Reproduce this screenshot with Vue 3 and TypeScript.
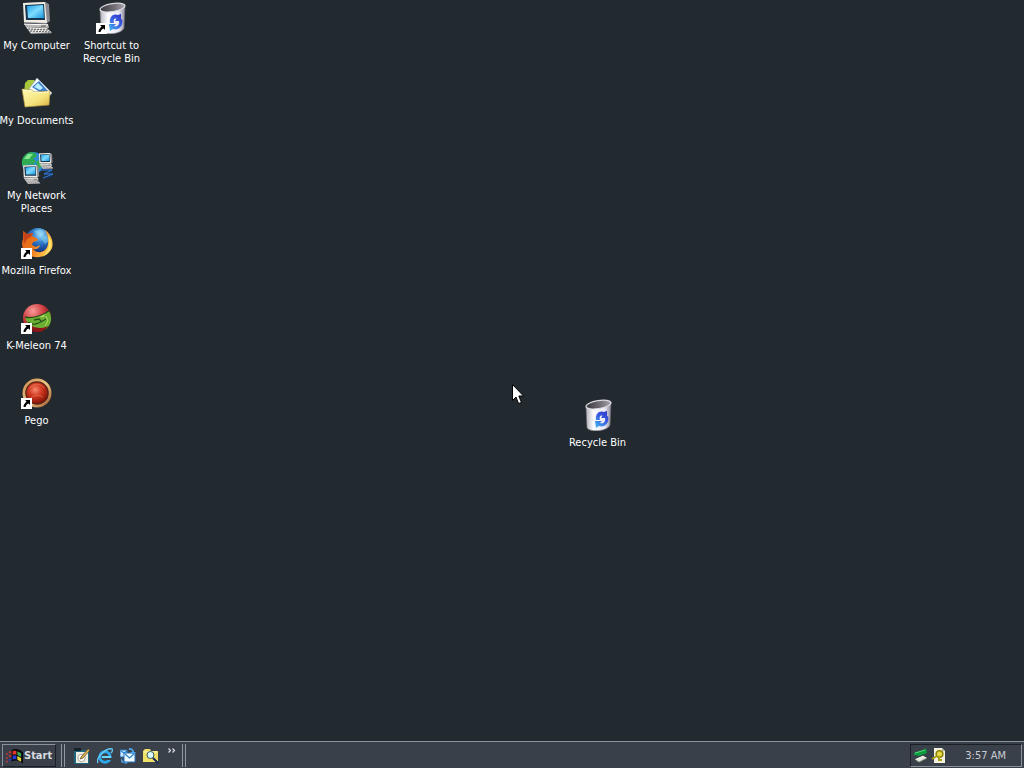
<script setup lang="ts">
interface DesktopItem {
  id: string
  label: string
  icon: string
  column: number
  row: number
  shortcut?: boolean
}

const items: DesktopItem[] = [
  { id: 'computer', label: 'My Computer', icon: 'computer', column: 1, row: 1 },
  { id: 'documents', label: 'My Documents', icon: 'documents', column: 1, row: 2 },
  { id: 'network', label: 'My Network Places', icon: 'network', column: 1, row: 3 },
  { id: 'firefox', label: 'Mozilla Firefox', icon: 'firefox', column: 1, row: 4, shortcut: true },
  { id: 'kmeleon', label: 'K-Meleon 74', icon: 'kmeleon', column: 1, row: 5, shortcut: true },
  { id: 'pego', label: 'Pego', icon: 'pego', column: 1, row: 6, shortcut: true },
  { id: 'bin-link', label: 'Shortcut to Recycle Bin', icon: 'bin', column: 2, row: 1, shortcut: true },
]

const launchers = [
  { id: 'show', label: 'Show Desktop' },
  { id: 'ie', label: 'Internet Explorer' },
  { id: 'mail', label: 'Mail' },
  { id: 'search', label: 'Search' },
]
</script>

<template>
  <div class="screen">
    <svg class="defs" width="0" height="0" aria-hidden="true">
      <defs>
        <linearGradient id="gScreen" x1="0" y1="0" x2="1" y2="1">
          <stop offset="0" stop-color="#1d9fe8" /><stop offset=".5" stop-color="#7fdcff" /><stop offset="1" stop-color="#1794dc" />
        </linearGradient>
        <linearGradient id="gBin" x1="0" y1="0" x2="1" y2="0">
          <stop offset="0" stop-color="#b4b3ba" /><stop offset=".3" stop-color="#fbfbff" /><stop offset=".75" stop-color="#e9e8f4" /><stop offset="1" stop-color="#8c8a9c" />
        </linearGradient>
        <linearGradient id="gBinIn" x1="0" y1="0" x2="1" y2="0">
          <stop offset="0" stop-color="#39363c" /><stop offset=".6" stop-color="#77727a" /><stop offset="1" stop-color="#aaa5ae" />
        </linearGradient>
        <linearGradient id="gArrow" gradientUnits="userSpaceOnUse" x1="14" y1="28" x2="27" y2="12">
          <stop offset="0" stop-color="#43b0f0" /><stop offset=".5" stop-color="#3a5fe0" /><stop offset="1" stop-color="#2b2fc4" />
        </linearGradient>
        <linearGradient id="gFolder" x1="0" y1="0" x2="1" y2="1">
          <stop offset="0" stop-color="#fffbb0" /><stop offset=".6" stop-color="#f5e27c" /><stop offset="1" stop-color="#d9b13e" />
        </linearGradient>
        <radialGradient id="gGlobe" cx=".6" cy=".25" r=".7">
          <stop offset="0" stop-color="#a6e4ff" /><stop offset=".45" stop-color="#2f7ccc" /><stop offset="1" stop-color="#0c2c74" />
        </radialGradient>
        <linearGradient id="gFox" x1="0" y1="0" x2="1" y2=".4">
          <stop offset="0" stop-color="#e4601c" /><stop offset=".55" stop-color="#ee7a1c" /><stop offset="1" stop-color="#ffc94a" />
        </linearGradient>
        <radialGradient id="gRed" cx=".42" cy=".35" r=".65">
          <stop offset="0" stop-color="#f58a70" /><stop offset=".45" stop-color="#d33a22" /><stop offset="1" stop-color="#861408" />
        </radialGradient>
        <radialGradient id="gCap" cx=".35" cy=".25" r=".75">
          <stop offset="0" stop-color="#f79a98" /><stop offset=".5" stop-color="#cf3e42" /><stop offset="1" stop-color="#641014" />
        </radialGradient>
        <linearGradient id="gGold" x1="0" y1="0" x2="1" y2="1">
          <stop offset="0" stop-color="#c98548" /><stop offset=".5" stop-color="#efc98a" /><stop offset="1" stop-color="#9a4e20" />
        </linearGradient>
      </defs>

      <symbol id="monitor" viewBox="0 0 32 32">
        <path d="M3 1 24 0 28 2 29 19 25 22 3 21Z" fill="#8b8a90" />
        <path d="M2 1 24 0 26 21 3 20Z" fill="#f0eee4" />
        <path d="M4 3 23 2 24 18 5 18Z" fill="#17354e" />
        <path d="M6 4 22 3 23 16 7 16Z" fill="url(#gScreen)" />
        <path d="M3 22H27L28 26 5 25Z" fill="#b9b7b4" /><path d="M3 22 27 23" stroke="#fff" />
        <path d="M20 24h5" stroke="#555" />
        <path d="M5 25 26 26 31 31 10 32Z" fill="#c7c5c3" />
        <path d="M6 26 26 27M8 28 28 29M10 30 30 30" stroke="#f8f7f3" stroke-dasharray="2 1" />
        <path d="M7 27 27 28M9 29 29 30M10 32 31 31" stroke="#66646a" stroke-dasharray="2 1" />
      </symbol>

      <symbol id="computer" viewBox="0 0 32 32"><use href="#monitor" width="32" height="32" /></symbol>

      <symbol id="bin" viewBox="0 0 32 32">
        <path d="M4 7 29 3 28 26C26 32 9 34 5 29Z" fill="url(#gBin)" stroke="#75737c" stroke-width=".6" />
        <ellipse cx="16.5" cy="5.6" rx="12.6" ry="4" transform="rotate(-9 16.5 5.6)" fill="url(#gBinIn)" stroke="#dcdbe2" stroke-width="1.1" />
        <path d="M14 21C13 14 18 11 22 13L25 12V19L19 19 20.500 16.500C18 16 17 18 18 21Z" fill="url(#gArrow)" />
        <path d="M26 17C28 24 22 29 17 27L14 29 13 22 20 22 18 24C21 25 24 23 23 19Z" fill="url(#gArrow)" />
      </symbol>

      <symbol id="documents" viewBox="0 0 32 32">
        <path d="M4 6 7 3H13L16 6V16H3Z" fill="#a8c83c" />
        <path d="M16 1 31 16 24 24 8 12Z" fill="#f7faff" stroke="#92a7bc" stroke-width=".7" />
        <path d="M18 4 27 14 22 17 11 10Z" fill="#3f7fc7" /><path d="M17 6 22 11 19 13 13 10Z" fill="#b8eeff" />
        <path d="M1 12 11 13 13 15 29 14 28 28 4 30Z" fill="url(#gFolder)" stroke="#b29a45" stroke-width=".7" />
        <path d="M2 13 11 14 13 16 28 15" fill="none" stroke="#fffdd0" />
      </symbol>

      <symbol id="network" viewBox="0 0 32 32">
        <circle cx="12" cy="11" r="11" fill="#2d8bd2" />
        <path d="M10 0C4 1 0 6 1 13L5 17 8 12 12 13 15 9 12 7 16 4 14 1ZM15 10 20 7 22 13 17 18Z" fill="#2fab51" />
        <path d="M3 7 7 2 12 2 8 7Z" fill="#8be895" />
        <path d="M20 18H31M31 20 23 22H32M31 24 22 26" fill="none" stroke="#10305c" stroke-width="2" />
        <path d="M20 18H31L23 22H32L22 26" fill="none" stroke="#3f83dd" stroke-width=".9" />
        <use href="#monitor" x="17" y="1" width="16" height="16" />
        <use href="#monitor" x="1" y="13" width="19" height="19" />
      </symbol>

      <symbol id="firefox" viewBox="0 0 32 32">
        <circle cx="17" cy="14" r="13" fill="url(#gGlobe)" />
        <path d="M13 4 19 3 23 5 20 8 16 7ZM20 11 26 8 28 14 24 17Z" fill="#8bd5ef" opacity=".55" />
        <path d="M2 4 6 7 12 6 11 9 17 12 16 14 12 15 11 18 15 20 19 18C18 22 15 23 12 22 17 28 26 25 27 17 28 11 26 7 24 3 30 7 33 15 31 21 28 29 16 33 8 28 1 24 0 17 2 12Z" fill="url(#gFox)" />
        <path d="M2 4 6 7 12 6 10 10 6 12 3 17Z" fill="#c64317" />
        <path d="M27 8C33 16 30 26 21 30 28 25 29 17 27 8Z" fill="#ffe374" />
      </symbol>

      <symbol id="kmeleon" viewBox="0 0 32 32">
        <circle cx="16" cy="16" r="14" fill="url(#gCap)" />
        <path d="M4 15C11 17 22 13 28 9 32 16 30 23 25 27L13 25 6 20Z" fill="#6caf34" />
        <path d="M4 15C12 17 22 13 28 9M7 20C12 25 20 20 25 17M13 18 18 17 20 19" fill="none" stroke="#244f17" stroke-width="1.3" />
        <path d="M18 15 24 12 23 15Z" fill="#b0da63" /><path d="M25 14 27 19 24 24" fill="none" stroke="#b1dc5c" />
        <path d="M8 24C14 27 21 27 27 24 22 32 11 32 8 24Z" fill="#8c1515" />
      </symbol>

      <symbol id="pego" viewBox="0 0 32 32">
        <circle cx="16" cy="16" r="14.5" fill="url(#gGold)" /><circle cx="16" cy="16" r="11.8" fill="#572318" />
        <circle cx="16" cy="16" r="10.6" fill="url(#gRed)" />
        <path d="M9 11C12 6 20 6 23 11M10 21C13 18 19 18 22 20" fill="none" stroke="#ffac91" opacity=".35" />
      </symbol>

      <symbol id="shortcut" viewBox="0 0 11 11">
        <path d="M0 0H11V11H0Z" fill="#fff" />
        <path d="M4 2H9V7L7.500 5.500C6 6 5 7 4.500 9H2.500C2.500 6.500 4 5 5.500 3.500Z" fill="#000" />
      </symbol>

      <symbol id="flag" viewBox="0 0 18 16">
        <path d="M0 5H2V7H0ZM0 9H2V11H0ZM0 13H2V15H0ZM3 3H6V5H3ZM3 7H6V9H3Z" fill="#b73532" />
        <path d="M3 11H6V13H3Z" fill="#2939b5" />
        <path d="M6 2C9 0 13 0 18 4V16C13 12 10 12 6 14Z" fill="#060709" />
        <path d="M7 3C9 2 10 2 11 3V7C10 6 9 6 7 7Z" fill="#e2362c" /><path d="M12 3 16 5V9L12 7Z" fill="#39a853" />
        <path d="M7 8C9 7 10 7 11 8V12C10 11 9 11 7 12Z" fill="#2939d5" /><path d="M12 8 16 10V14L12 12Z" fill="#e7d632" />
      </symbol>

      <symbol id="show" viewBox="0 0 16 16">
        <path d="M0 2H15V16H0Z" fill="#1d667d" /><path d="M2 4H14V15H2Z" fill="#efeee4" />
        <path d="M0 0H7V3H0Z" fill="#15242a" /><circle cx="7.5" cy="10" r="3.7" fill="#fff" stroke="#a8a790" />
        <path d="M7 9 14 1 16 2 9 10 6 11Z" fill="#ddb554" stroke="#56401e" stroke-width=".7" />
      </symbol>
      <symbol id="ie" viewBox="0 0 16 16">
        <circle cx="8" cy="9" r="5.2" fill="none" stroke="#2ca8ed" stroke-width="3" />
        <path d="M5 9H14" stroke="#6cd6ff" stroke-width="2" /><path d="M10 10H16V12H10Z" fill="#3a404a" />
        <path d="M1 15C-2 10 10-1 15 1 16 2 15 4 14 5" fill="none" stroke="#63c8f4" stroke-width="1.4" />
      </symbol>
      <symbol id="mail" viewBox="0 0 16 16">
        <path d="M0 2H7V9H0Z" fill="#cbe8ff" stroke="#2671b8" />
        <path d="M4 5H15V14H4Z" fill="#eef8ff" stroke="#2671b8" />
        <path d="M1 3 4 5 7 3M5 6 9.500 10 14 6" fill="none" stroke="#2b83d0" stroke-width="1.3" />
        <path d="M9 0C12 0 14 1 14 4H16L13 7 10 4H12C12 2 11 2 9 2ZM1 10V13C1 15 3 15 5 15V13L8 15 5 16" fill="#4b9fe2" />
      </symbol>
      <symbol id="search" viewBox="0 0 16 16">
        <path d="M0 3 2 1H7L8 3H15V14H0Z" fill="#f0df67" /><path d="M1 4H14" stroke="#fff9bd" />
        <circle cx="7.5" cy="7" r="3.5" fill="#d9f7ff" stroke="#35575b" /><path d="M10 10 15 15" stroke="#122753" stroke-width="2" />
      </symbol>
      <symbol id="eject" viewBox="0 0 16 16">
        <path d="M1 5 9 3 13 0 14 5 7 8 1 7Z" fill="#0a9b3f" /><path d="M2 5 12 2" stroke="#50e07d" />
        <path d="M1 11 10 7 15 10 6 15Z" fill="#e6e9e2" stroke="#283431" /><path d="M3 12 6 14 14 10" stroke="#849087" fill="none" />
      </symbol>
      <symbol id="update" viewBox="0 0 16 16">
        <path d="M3 0H11L14 3V15H3Z" fill="#f3f0df" /><path d="M11 0V3H14" fill="#b6b39c" />
        <circle cx="8.500" cy="6" r="3.300" fill="#e9dc42" stroke="#8c8208" stroke-width="1.600" />
        <path d="M6 8 1 11M8 9V12H11" fill="none" stroke="#aaa10e" stroke-width="2" />
      </symbol>
    </svg>

    <main class="desktop">
      <div class="grid">
        <button v-for="item in items" :key="item.id" type="button" class="item" :class="['col-' + item.column, 'row-' + item.row]">
          <span class="picture">
            <svg class="icon" aria-hidden="true"><use :href="'#' + item.icon" /></svg>
            <svg v-if="item.shortcut" class="badge" aria-hidden="true"><use href="#shortcut" /></svg>
          </span>
          <span class="label">{{ item.label }}</span>
        </button>
      </div>
      <button type="button" class="item loose">
        <span class="picture"><svg class="icon" aria-hidden="true"><use href="#bin" /></svg></span>
        <span class="label">Recycle Bin</span>
      </button>
      <svg class="pointer" viewBox="0 0 12 21" aria-hidden="true">
        <path d="M.5 .5V16.5L4 13 6.5 19.5 9.5 18.5 6.8 12H11.5Z" fill="#fff" stroke="#000" />
      </svg>
    </main>

    <footer class="taskbar">
      <button type="button" class="start">
        <svg class="flag" aria-hidden="true"><use href="#flag" /></svg>
        <span>Start</span>
      </button>
      <span class="rail"></span>
      <nav class="quick" aria-label="Quick Launch">
        <button v-for="l in launchers" :key="l.id" type="button" class="launch" :aria-label="l.label">
          <svg class="small" aria-hidden="true"><use :href="'#' + l.id" /></svg>
        </button>
        <button type="button" class="more" aria-label="More">
          <svg viewBox="0 0 8 5" aria-hidden="true"><path d="M.5 .5 2.5 2.5 .5 4.5M4.5 .5 6.5 2.5 4.5 4.5" fill="none" stroke="#d8dbe0" stroke-width="1.2" /></svg>
        </button>
      </nav>
      <span class="rail"></span>
      <div class="tray">
        <svg class="small" aria-hidden="true"><use href="#eject" /></svg>
        <svg class="small" aria-hidden="true"><use href="#update" /></svg>
        <time class="clock">3:57 AM</time>
      </div>
    </footer>
  </div>
</template>

<style>
body {
  margin: 0;
  background: #22292f;
}
</style>

<style scoped>
.screen {
  display: flex;
  flex-direction: column;
  min-height: 100vh;
  background: #22292f;
  color: #fff;
  font-family: "DejaVu Sans Condensed", "DejaVu Sans", sans-serif;
  font-size: 11px;
  line-height: 13px;
  overflow: hidden;
}
.defs {
  position: absolute;
}
button {
  border: 0;
  padding: 0;
  margin: 0;
  background: none;
  color: inherit;
  font: inherit;
}
.desktop {
  position: relative;
  flex: 1;
}
.grid {
  display: grid;
  grid-template-columns: repeat(2, 73px);
  grid-auto-rows: 75px;
  column-gap: 2px;
}
.item {
  display: flex;
  flex-direction: column;
  align-items: center;
  gap: 5px;
  padding-top: 2px;
}
.col-1 { grid-column: 1; }
.col-2 { grid-column: 2; }
.row-1 { grid-row: 1; }
.row-2 { grid-row: 2; }
.row-3 { grid-row: 3; }
.row-4 { grid-row: 4; }
.row-5 { grid-row: 5; }
.row-6 { grid-row: 6; }
.picture {
  position: relative;
  width: 32px;
  height: 32px;
}
.icon {
  display: block;
  width: 32px;
  height: 32px;
}
.badge {
  position: absolute;
  left: 0;
  bottom: 0;
  width: 11px;
  height: 11px;
}
.label {
  margin: 0 -4px;
  text-align: center;
}
.loose {
  position: absolute;
  left: 561px;
  top: 397px;
  width: 73px;
}
.pointer {
  position: absolute;
  left: 512px;
  top: 384px;
  width: 12px;
  height: 21px;
}
.taskbar {
  display: flex;
  align-items: stretch;
  gap: 5px;
  height: 23px;
  padding: 2px 2px 1px;
  border-top: 1px solid #8b9199;
  background: #3a404a;
}
.start {
  display: flex;
  align-items: center;
  gap: 1px;
  padding: 0 3px;
  border: 1px solid;
  border-color: #8b9199 #1b2026 #1b2026 #8b9199;
  font-weight: bold;
  color: #d8dbe0;
}
.flag {
  width: 17px;
  height: 16px;
}
.rail {
  width: 2px;
  border-left: 1px solid #9299a2;
  border-right: 1px solid #9299a2;
}
.quick {
  display: flex;
  align-items: center;
  gap: 7px;
  padding: 0 1px 0 4px;
}
.small {
  display: block;
  width: 16px;
  height: 16px;
}
.more {
  align-self: flex-start;
  padding: 4px 0 0 2px;
}
.more svg {
  display: block;
  width: 8px;
  height: 5px;
}
.tray {
  display: flex;
  align-items: center;
  gap: 2px;
  margin-left: auto;
  padding: 0 15px 0 2px;
  border: 1px solid;
  border-color: #1b2026 #8b9199 #8b9199 #1b2026;
}
.clock {
  padding-left: 16px;
  color: #c9ccd2;
}
</style>
